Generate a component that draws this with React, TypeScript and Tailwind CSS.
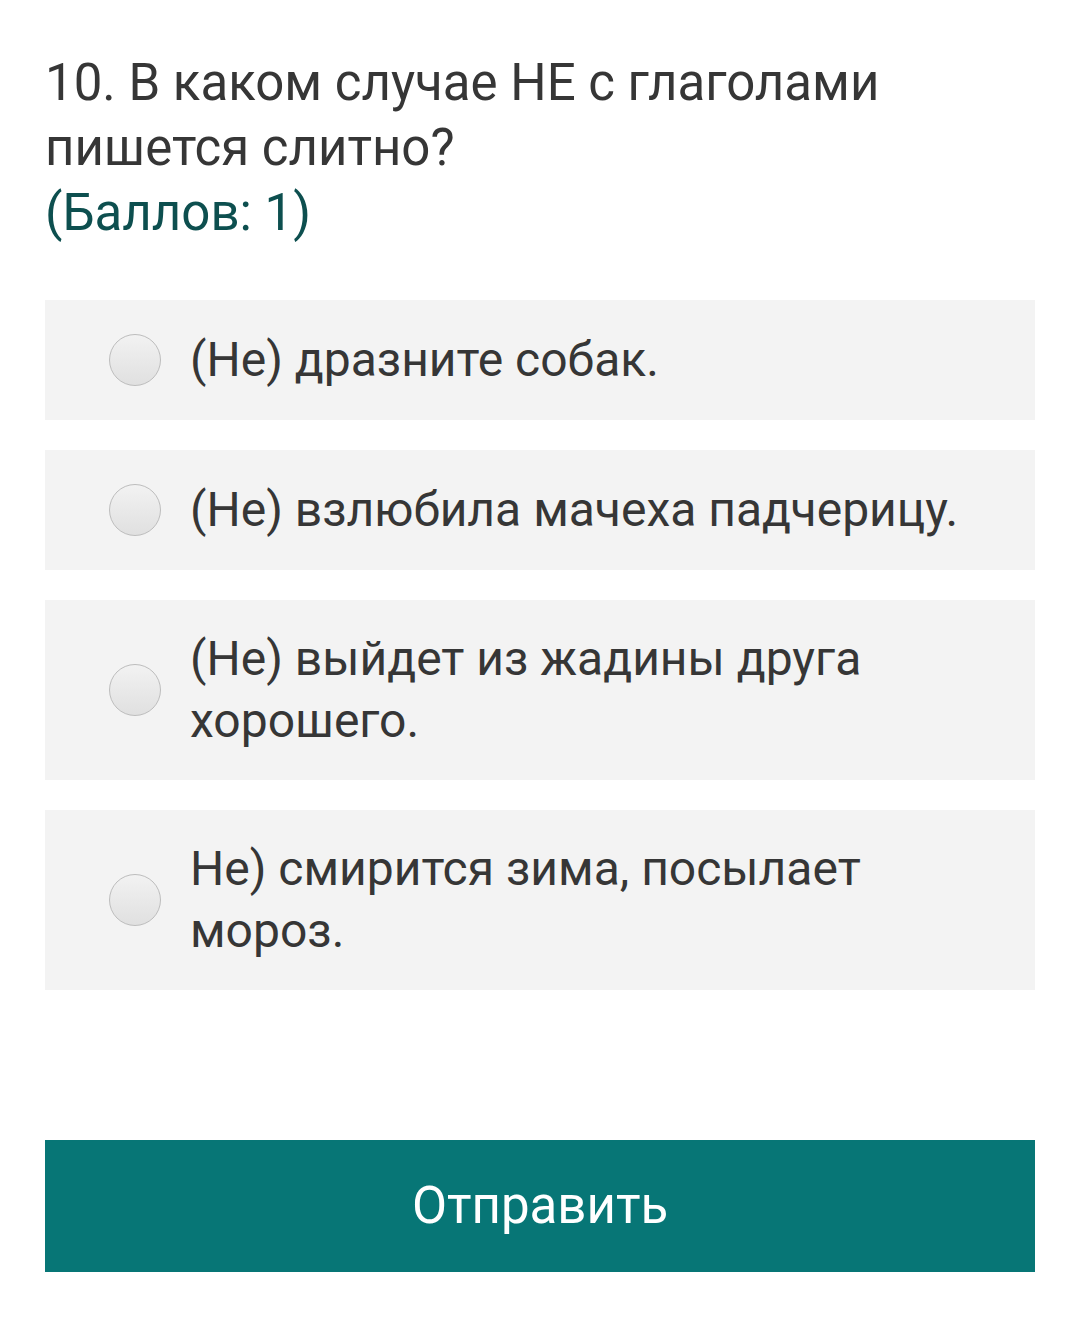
const options = [
  "(Не) дразните собак.",
  "(Не) взлюбила мачеха падчерицу.",
  "(Не) выйдет из жадины друга хорошего.",
  "Не) смирится зима, посылает мороз.",
];

export default function App() {
  return (
    <div
      className="min-h-screen bg-white px-[45px] pt-[50px]"
      style={{ fontFamily: "Roboto, 'Noto Sans', sans-serif" }}
    >
      {/* Question */}
      <h1 className="text-[51px] leading-[65px] font-normal text-[#363636] pr-[120px]">
        10. В каком случае НЕ с глаголами пишется слитно?
        <span className="block text-[#0d4f4f]">(Баллов: 1)</span>
      </h1>

      {/* Options */}
      <div className="mt-[55px] flex flex-col gap-[30px]">
        {options.map((text) => (
          <label
            key={text}
            className="flex items-center bg-[#f3f3f3] min-h-[120px] pl-[64px] pr-[40px] py-[28px]"
          >
            <span className="shrink-0 w-[52px] h-[52px] rounded-full border-[1.5px] border-[#bdbdbd] bg-gradient-to-b from-[#f2f2f2] to-[#e0e0e0]" />
            <span className="ml-[29px] text-[48px] leading-[62px] font-normal text-[#363636]">
              {text}
            </span>
          </label>
        ))}
      </div>

      {/* Submit */}
      <button className="mt-[150px] w-full h-[132px] bg-[#077676] text-white text-[51px] font-normal">
        Отправить
      </button>
    </div>
  );
}
